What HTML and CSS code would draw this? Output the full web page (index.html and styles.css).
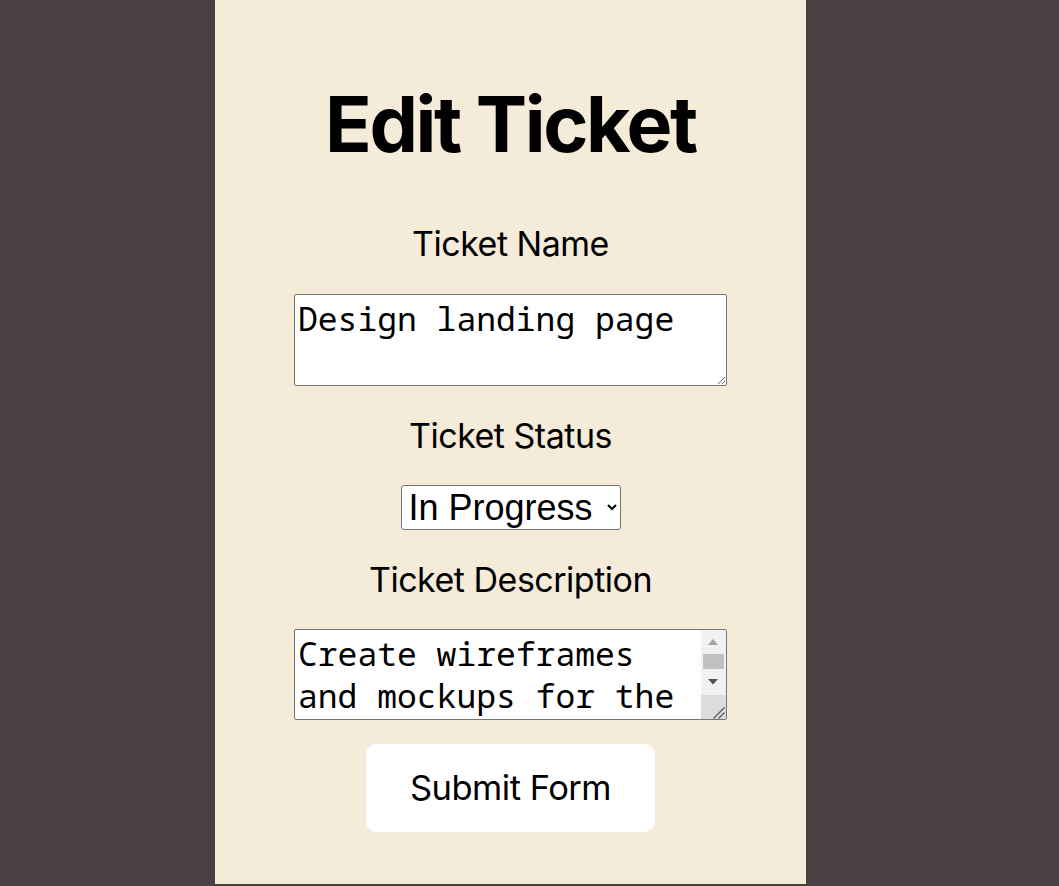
FILE: index.html
```html
<!DOCTYPE html>
<html lang="en">
<head>
<meta charset="utf-8">
<title>Edit Ticket</title>
<link rel="stylesheet" href="styles.css">
</head>
<body>
<div class="page">
  <main class="panel">
    <h1 class="title">Edit Ticket</h1>
    <form class="form">
      <label class="label" for="name">Ticket Name</label>
      <textarea class="field" id="name">Design landing page</textarea>
      <label class="label label-status" for="status">Ticket Status</label>
      <select class="select" id="status">
        <option>To Do</option>
        <option selected>In Progress</option>
        <option>Done</option>
      </select>
      <label class="label label-desc" for="desc">Ticket Description</label>
      <div class="desc-wrap">
        <textarea class="field field-desc" id="desc">Create wireframes and mockups for the new landing page, including hero section, feature highlights and call to action.</textarea>
        <div class="vscroll" aria-hidden="true">
          <div class="vscroll-up">
            <svg width="25" height="22" viewBox="0 0 25 22"><path d="M7 15h10l-5-6z" fill="#a3a3a3"/></svg>
          </div>
          <div class="vscroll-track">
            <div class="vscroll-thumb"></div>
          </div>
          <div class="vscroll-down">
            <svg width="25" height="20" viewBox="0 0 25 20"><path d="M7 4h10l-5 5.5z" fill="#505050"/></svg>
          </div>
          <div class="vscroll-corner">
            <svg width="25" height="24" viewBox="0 0 25 24"><path d="M23.5 12.5l-11 11M23.5 17.5l-6 6" stroke="#5a5a5a" stroke-width="1.3" fill="none"/></svg>
          </div>
        </div>
      </div>
      <button class="submit" type="button">Submit Form</button>
    </form>
  </main>
</div>
</body>
</html>
```

FILE: styles.css
```css
html, body {
  margin: 0;
  padding: 0;
  background: #4a3f41;
  height: 100%;
}

.page {
  display: flex;
  padding-left: 215px;
  min-height: 884px;
}

.panel {
  width: 591px;
  min-height: 884px;
  background: #f4ebd9;
  display: flex;
  flex-direction: column;
  align-items: center;
  font-family: Inter, "Liberation Sans", sans-serif;
  color: #000;
}

.title {
  margin: 78px 0 0;
  font-size: 77px;
  font-weight: 700;
  line-height: 1.2;
  letter-spacing: -2.4px;
}

.form {
  display: flex;
  flex-direction: column;
  align-items: center;
  margin-top: 52px;
}

.label {
  font-size: 34px;
  font-weight: 400;
  line-height: 44px;
  letter-spacing: -0.5px;
}

.field {
  box-sizing: border-box;
  width: 433px;
  height: 92px;
  margin-top: 28px;
  padding: 3px 3px 2px;
  font-family: "Noto Sans Mono", "DejaVu Sans Mono", monospace;
  font-size: 33px;
  line-height: 42px;
  border: 1px solid #767676;
  border-radius: 2px;
  background: #fff;
  color: #000;
  overflow: hidden;
}

.label-status {
  margin-top: 28px;
}

.select {
  box-sizing: border-box;
  width: 220px;
  margin-top: 27px;
  height: 45px;
  padding: 0 2px 0 3px;
  font-family: "Liberation Sans", Arial, sans-serif;
  font-size: 36px;
  border: 1px solid #767676;
  border-radius: 3px;
  background: #fff;
  color: #000;
}

.label-desc {
  margin-top: 28px;
}

.desc-wrap {
  position: relative;
  margin-top: 27px;
  display: flex;
}

.field-desc {
  margin-top: 0;
  height: 91px;
  padding-right: 28px;
}

.vscroll {
  position: absolute;
  top: 1px;
  right: 1px;
  bottom: 1px;
  width: 25px;
  display: flex;
  flex-direction: column;
  background: #f1f1f1;
}

.vscroll-up {
  height: 22px;
  display: flex;
}

.vscroll-track {
  flex: 1;
  padding: 2px 2px 0;
}

.vscroll-thumb {
  height: 15px;
  background: #c1c1c1;
}

.vscroll-down {
  height: 20px;
  display: flex;
}

.vscroll-corner {
  height: 24px;
  background: #dcdcdc;
  display: flex;
}

.submit {
  margin-top: 24px;
  padding: 20px 44px;
  font-family: Inter, "Liberation Sans", sans-serif;
  font-size: 34.5px;
  line-height: 48px;
  letter-spacing: -0.5px;
  border: none;
  border-radius: 11px;
  background: #fff;
  color: #000;
}
```
